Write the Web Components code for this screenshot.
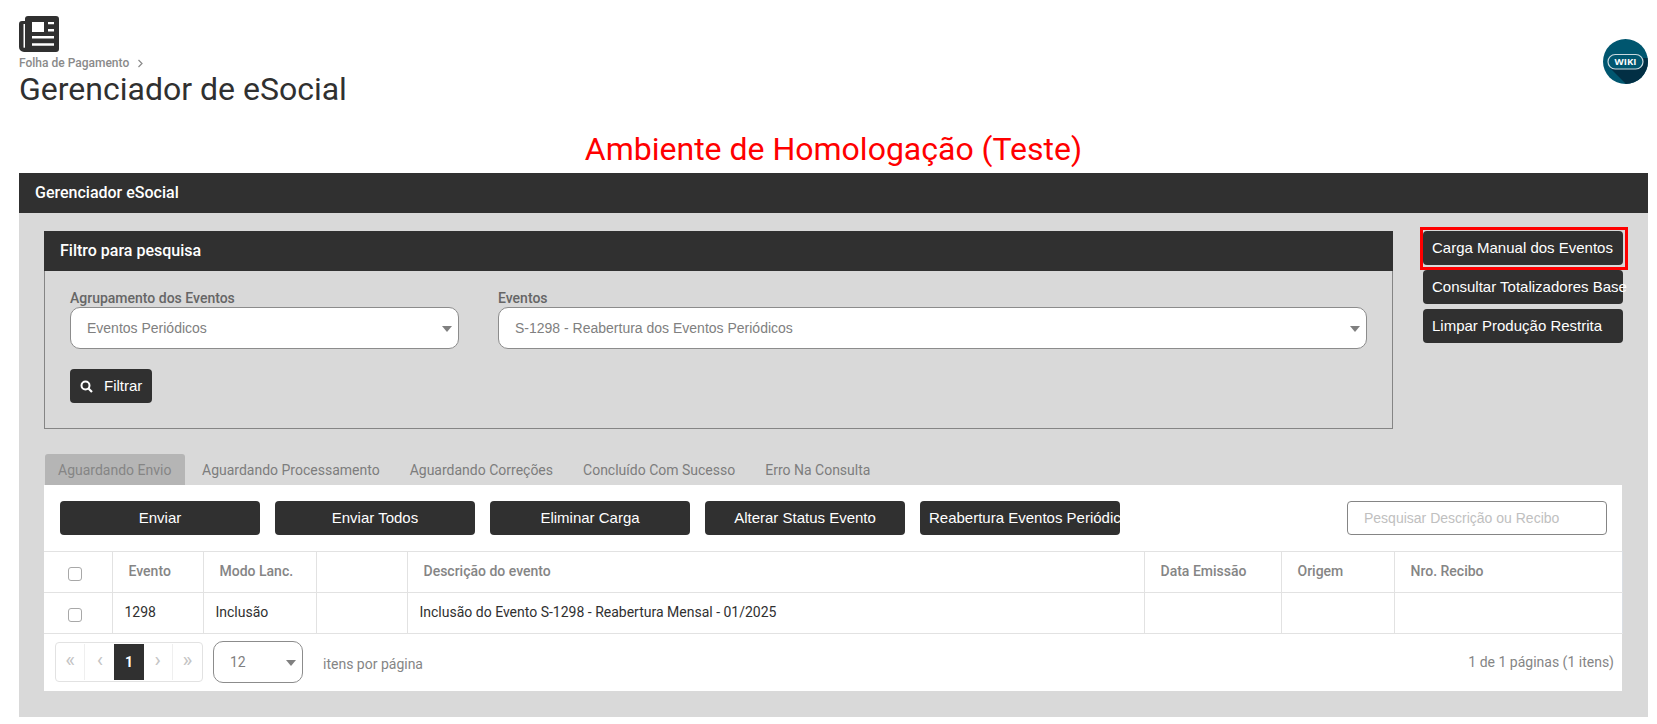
<!DOCTYPE html>
<html lang="pt-BR">
<head>
<meta charset="utf-8">
<title>Gerenciador de eSocial</title>
<style>
  html, body { margin: 0; background: #fff; }
  body { font-family: Roboto, "Liberation Sans", sans-serif; color: #303030; overflow: hidden; height: 724px; }
</style>
</head>
<body>
<es-page></es-page>

<script>
// small helper: every element is just a shadow root with its own style + markup
class Base extends HTMLElement {
  connectedCallback() {
    if (this.shadowRoot) return;
    this.attachShadow({ mode: "open" });
    this.shadowRoot.innerHTML = `<style>${this.css()}</style>${this.html()}`;
  }
  css() { return ""; }
  html() { return ""; }
}

class EsHeader extends Base {
  css() { return `
    :host { display: flex; justify-content: space-between; align-items: flex-start; padding: 16px 9px 0 19px; height: 97px; box-sizing: border-box; }
    svg { display: block; }
    .crumb { display: flex; align-items: center; gap: 8px; margin-top: 3px; height: 16px; font-size: 12px; font-weight: 500; color: #8a8a8a; }
    h1 { margin: 0; font-size: 32px; font-weight: 400; line-height: 36px; color: #303030; }
    .wiki { margin-top: 23px; }
    .wiki text { font: 700 9.5px "Open Sans", Roboto, sans-serif; fill: #fff; }
  `; }
  html() { return `
    <div>
      <svg width="40" height="36" viewBox="0 0 40 36">
        <path fill="#303030" fill-rule="evenodd" d="M9 0h28a3 3 0 0 1 3 3v30a3 3 0 0 1-3 3H5a5 5 0 0 1-5-5V8a3 3 0 0 1 3-3h3V3a3 3 0 0 1 3-3zM4.500 8H6v23.500a1.200 1.200 0 0 1-1.500 0zM13 6v10h12V6zM29 6v2.200h6V6zM29 13v2.400h6V13zM13 20v2.400h22V20zM13 27.300v2.500h22v-2.500z"/>
      </svg>
      <div class="crumb"><span>Folha de Pagamento</span>
        <svg width="7" height="9" viewBox="0 0 7 9"><path d="M1.500 1l3.500 3.500L1.500 8" fill="none" stroke="#8a8a8a" stroke-width="1.200"/></svg>
      </div>
      <h1>Gerenciador de eSocial</h1>
    </div>
    <svg class="wiki" width="45" height="45" viewBox="0 0 45 45">
      <defs><clipPath id="c"><circle cx="22.500" cy="22.500" r="22.500"/></clipPath></defs>
      <circle cx="22.500" cy="22.500" r="22.500" fill="#00566f"/>
      <path clip-path="url(#c)" d="M7 29L23 45H45V19H38z" fill="#022f44"/>
      <rect x="5" y="15.500" width="35" height="14.500" rx="7.250" fill="#00566f" stroke="#c9d9df" stroke-width="1.200"/>
      <text x="22.500" y="26.300" text-anchor="middle">WIKI</text>
    </svg>
  `; }
}

class EsBanner extends Base {
  css() { return `
    :host { display: block; text-align: center; color: #ff0000; font-size: 32px; line-height: 46px; height: 76px; padding: 29px 0 0 10px; box-sizing: border-box; }
  `; }
  html() { return `<slot></slot>`; }
}

// dark title bar shared by the page card and the filter box
class EsBar extends Base {
  css() { return `
    :host { display: flex; align-items: center; box-sizing: border-box; height: 40px; padding: 0 0 1px 16px; background: #303030; color: #fff; font-size: 16px; font-weight: 500; }
  `; }
  html() { return `<slot></slot>`; }
}

class EsButton extends Base {
  css() { return `
    :host { display: block; position: relative; box-sizing: border-box; height: 34px; background: #303030; color: #fff; border-radius: 4px;
      font: 15px "Liberation Sans", Arial, sans-serif; line-height: 34px; white-space: nowrap; }
    :host([center]) { text-align: center; width: 200px; }
    :host([left]) { width: 200px; padding-left: 9px; }
    :host([clip]) { overflow: hidden; }
    :host([auto]) { display: inline-flex; align-items: center; gap: 11px; padding: 0 9px 0 10px; width: 82px; }
    /* the red marker drawn over the button in the screenshot */
    :host([marked])::after { content: ""; position: absolute; top: -4px; left: -3px; right: -5px; bottom: -5px; border: 3px solid #ff0000; }
  `; }
  html() { return `<slot name="icon"></slot><slot></slot>`; }
}

class EsSelect extends Base {
  css() { return `
    :host { display: block; position: relative; box-sizing: border-box; height: 42px; background: #fff; border: 1px solid #8c8c8c;
      border-radius: 10px; padding-left: 16px; font: 14px/40px "Liberation Sans", Arial, sans-serif; color: #808080; }
    i { position: absolute; right: 6px; top: 18px; border: 5.500px solid transparent; border-top: 6px solid #808080; border-bottom: 0; }
  `; }
  html() { return `<slot></slot><i></i>`; }
}

class EsField extends Base {
  css() { return `
    :host { display: block; }
    label { display: block; height: 18px; line-height: 18px; font-size: 14px; font-weight: 500; color: #666; }
  `; }
  html() { return `<label>${this.getAttribute("label")}</label><slot></slot>`; }
}

class EsFilter extends Base {
  css() { return `
    :host { display: block; width: 1349px; }
    .body { box-sizing: border-box; height: 158px; border: 1px solid #858585; border-top: 0; padding: 18px 25px 0; }
    .row { display: grid; grid-template-columns: 389px 869px; gap: 39px; }
    .act { margin-top: 20px; }
    svg { display: block; }
  `; }
  html() { return `
    <es-bar>Filtro para pesquisa</es-bar>
    <div class="body">
      <div class="row">
        <es-field label="Agrupamento dos Eventos"><es-select>Eventos Periódicos</es-select></es-field>
        <es-field label="Eventos"><es-select>S-1298 - Reabertura dos Eventos Periódicos</es-select></es-field>
      </div>
      <div class="act">
        <es-button auto>
          <svg slot="icon" width="13" height="13" viewBox="0 0 13 13"><circle cx="5.500" cy="5.500" r="4" fill="none" stroke="#fff" stroke-width="2"/><path d="M8.500 8.500l3.500 3.500" stroke="#fff" stroke-width="2.200"/></svg>
          Filtrar
        </es-button>
      </div>
    </div>
  `; }
}

class EsTabs extends Base {
  css() { return `
    :host { display: flex; height: 31px; box-sizing: border-box; padding-left: 1px; font-size: 14px; color: #7d7d7d; }
    span { box-sizing: border-box; height: 31px; line-height: 31px; padding: 1px 13px 0; margin-right: 4px; white-space: nowrap; border-radius: 3px 3px 0 0; }
    span.on { background: #b5b5b5; color: #858585; width: 140px; }
  `; }
  html() {
    const tabs = ["Aguardando Envio", "Aguardando Processamento", "Aguardando Correções", "Concluído Com Sucesso", "Erro Na Consulta"];
    return tabs.map((t, i) => `<span class="${i === 0 ? "on" : ""}">${t}</span>`).join("");
  }
}

class EsGrid extends Base {
  css() { return `
    :host { display: block; }
    table { width: 1578px; table-layout: fixed; border-collapse: collapse; font-size: 14px; }
    th, td { height: 41px; padding: 0 12px; border: 1px solid #e2e2e2; text-align: left; white-space: nowrap; box-sizing: border-box; }
    th { padding: 0 0 3px 16px; font-weight: 500; color: #858585; font-size: 14px; }
    td { color: #303030; padding-bottom: 2px; }
    tr > :first-child { border-left: 0; padding: 0; text-align: center; }
    tr > :last-child { border-right-color: #d9dde2; }
    i { display: inline-block; width: 14px; height: 14px; box-sizing: border-box; border: 1px solid #a8a8a8; border-radius: 3px; background: #fff; vertical-align: middle; margin: 2px 6px 0 0; }
  `; }
  html() {
    const heads = ["Evento", "Modo Lanc.", "", "Descrição do evento", "Data Emissão", "Origem", "Nro. Recibo"];
    const row = ["1298", "Inclusão", "", "Inclusão do Evento S-1298 - Reabertura Mensal - 01/2025", "", "", ""];
    const widths = [68, 91, 113, 91, 737, 137, 113, 228];
    return `<table>
      <colgroup>${widths.map(w => `<col style="width:${w}px">`).join("")}</colgroup>
      <tr><th><i></i></th>${heads.map(h => `<th>${h}</th>`).join("")}</tr>
      <tr><td><i></i></td>${row.map(c => `<td>${c}</td>`).join("")}</tr>
    </table>`;
  }
}

class EsPager extends Base {
  css() { return `
    :host { display: flex; align-items: center; height: 58px; box-sizing: border-box; padding: 0 8px 2px 11px; font-size: 14px; color: #858585; }
    .pages { display: flex; box-sizing: border-box; height: 40px; width: 148px; border: 1px solid #e2e2e2; border-radius: 4px; padding: 1px 0; }
    .pages span { flex: 0 0 29.200px; display: flex; align-items: center; justify-content: center; box-sizing: border-box; border-right: 1px solid #efefef; color: #c4c4c4; font-size: 21px; line-height: 1; padding-bottom: 3px; }
    .pages span:nth-child(2), .pages span:nth-child(3), .pages span:nth-child(5) { border-right: 0; }
    .pages span.on { background: #303030; color: #fff; font-weight: 700; font-size: 14px; padding-bottom: 0; }
    es-select { width: 90px; height: 42px; margin-left: 10px; padding-left: 16px; font: 14px/40px Roboto, sans-serif; }
    .per { margin-left: 20px; padding-top: 4px; }
    .info { margin-left: auto; }
  `; }
  html() { return `
    <div class="pages"><span>«</span><span>‹</span><span class="on">1</span><span>›</span><span>»</span></div>
    <es-select>12</es-select>
    <span class="per">itens por página</span>
    <span class="info">1 de 1 páginas (1 itens)</span>
  `; }
}

class EsEvents extends Base {
  css() { return `
    :host { display: block; background: #fff; height: 206px; width: 1578px; }
    .tools { display: flex; gap: 15px; height: 66px; box-sizing: border-box; padding: 16px 0 0 16px; }
    .search { margin-left: auto; margin-right: 15px; box-sizing: border-box; width: 260px; height: 34px; border: 1px solid #858585; border-radius: 4px;
      padding-left: 16px; font: 14px/32px "Liberation Sans", Arial, sans-serif; color: #c0c0c0; }
  `; }
  html() { return `
    <div class="tools">
      <es-button center>Enviar</es-button>
      <es-button center>Enviar Todos</es-button>
      <es-button center>Eliminar Carga</es-button>
      <es-button center>Alterar Status Evento</es-button>
      <es-button left clip>Reabertura Eventos Periódicos</es-button>
      <div class="search">Pesquisar Descrição ou Recibo</div>
    </div>
    <es-grid></es-grid>
    <es-pager></es-pager>
  `; }
}

class EsPage extends Base {
  css() { return `
    :host { display: block; }
    .card { margin: 0 9px 0 19px; }
    .content { background: #d9d9d9; height: 504px; box-sizing: border-box; padding: 18px 25px 0; }
    .top { display: flex; align-items: flex-start; }
    .side { display: flex; flex-direction: column; gap: 5px; margin-left: 30px; width: 200px; }
    es-tabs { margin-top: 25px; }
  `; }
  html() { return `
    <es-header></es-header>
    <es-banner>Ambiente de Homologação (Teste)</es-banner>
    <div class="card">
      <es-bar>Gerenciador eSocial</es-bar>
      <div class="content">
        <div class="top">
          <es-filter></es-filter>
          <div class="side">
            <es-button left marked>Carga Manual dos Eventos</es-button>
            <es-button left>Consultar Totalizadores Base</es-button>
            <es-button left>Limpar Produção Restrita</es-button>
          </div>
        </div>
        <es-tabs></es-tabs>
        <es-events></es-events>
      </div>
    </div>
  `; }
}

customElements.define("es-header", EsHeader);
customElements.define("es-banner", EsBanner);
customElements.define("es-bar", EsBar);
customElements.define("es-button", EsButton);
customElements.define("es-select", EsSelect);
customElements.define("es-field", EsField);
customElements.define("es-filter", EsFilter);
customElements.define("es-tabs", EsTabs);
customElements.define("es-grid", EsGrid);
customElements.define("es-pager", EsPager);
customElements.define("es-events", EsEvents);
customElements.define("es-page", EsPage);
</script>
</body>
</html>
